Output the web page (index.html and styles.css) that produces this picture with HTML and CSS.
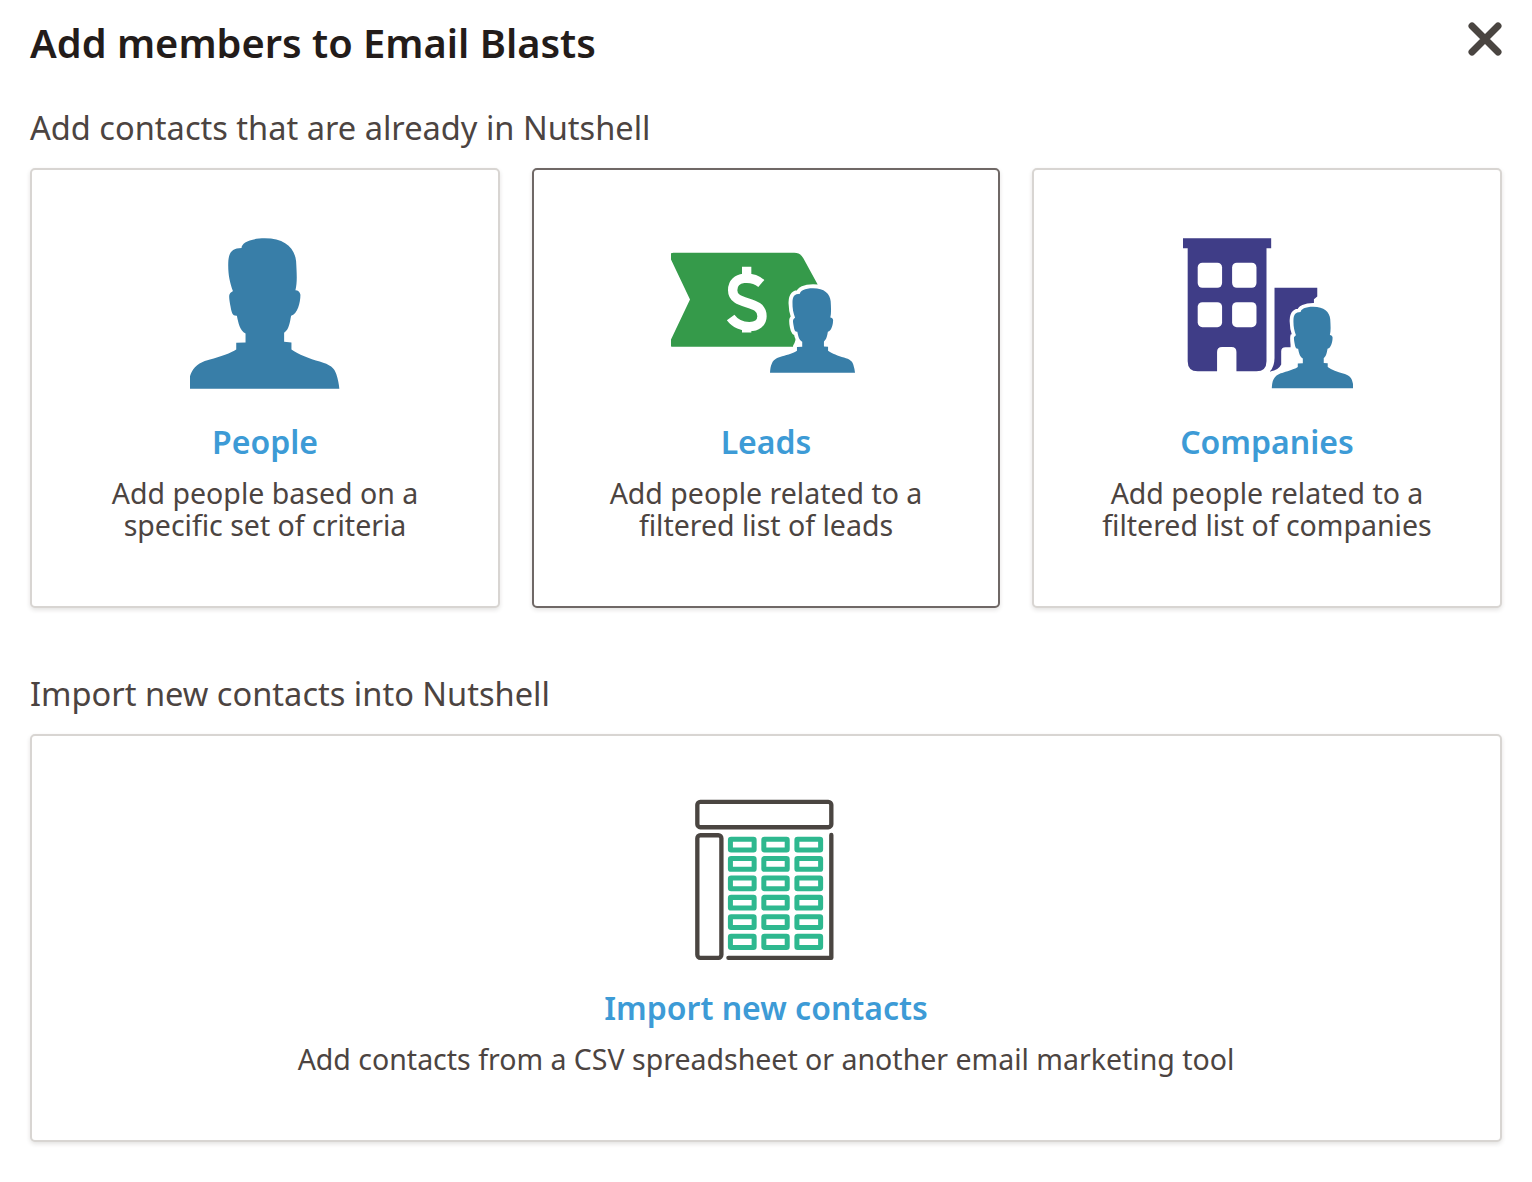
FILE: index.html
```html
<!DOCTYPE html>
<html lang="en">
<head>
<meta charset="utf-8">
<title>Add members to Email Blasts</title>
<link rel="stylesheet" href="styles.css">
</head>
<body>
<svg class="defs" aria-hidden="true"><defs>
<path id="person" d="M85 508C86 490 88 470 95 458C105 435 130 425 150 420C180 412 215 400 229 390L229 370L257 369L257 342C240 335 235 310 231 289C218 290 215 280 212 262C209 245 206 230 209 224C212 218 216 217 219 214C210 190 204 165 205 130C206 100 215 85 245 85C245 70 270 56 315 56C375 56 405 85 409 125C411 160 413 190 407 212C415 212 421 218 422 226C422 250 413 285 394 289C390 310 388 330 373 340L373 367L395 369L395 390C415 405 450 418 480 426C510 435 525 445 530 465C535 480 538 495 539 508Z"/>
</defs></svg>
<main class="page">
  <header class="head">
    <h1 class="title">Add members to Email Blasts</h1>
    <svg class="close" viewBox="0 0 34 34"><path d="M4 4L30 30M30 4L4 30"/></svg>
  </header>
  <h2 class="section section-first">Add contacts that are already in Nutshell</h2>
  <div class="cards">
    <a class="card">
      <div class="icon">
        <svg class="i-people" viewBox="90 56 454 452"><use href="#person" class="blue"/></svg>
      </div>
      <h3 class="card-title">People</h3>
      <p class="card-text">Add people based on a<br>specific set of criteria</p>
    </a>
    <a class="card card-active">
      <div class="icon">
        <svg class="i-leads" viewBox="65 66 573 362">
          <path class="green" d="M72 68H435Q453 68 462 84L505 163L470 230L432 350H72Q56 350 62 334L122 208L62 82Q56 68 72 68Z"/>
          <path class="dollar" d="M292 110V140M292 280V307M336 160C310 138 250 135 250 180C250 230 338 205 338 258C338 300 270 298 244 262"/>
          <g transform="translate(314.3 142.7) scale(.5617)"><use href="#person" class="blue halo"/></g>
        </svg>
      </div>
      <h3 class="card-title">Leads</h3>
      <p class="card-text">Add people related to a<br>filtered list of leads</p>
    </a>
    <a class="card">
      <div class="icon">
        <svg class="i-companies" viewBox="35 42 512 450">
          <path class="purple" d="M38 42H302V72H288V410Q288 440 258 440H198V382Q198 367 183 367H155Q140 367 140 382V440H82Q52 440 52 410V72H38Z"/>
          <g class="holes"><rect x="82" y="115" width="73" height="75" rx="14"/><rect x="185" y="115" width="73" height="75" rx="14"/><rect x="82" y="233" width="73" height="75" rx="14"/><rect x="185" y="233" width="73" height="75" rx="14"/></g>
          <path class="purple" d="M312 190H440V216L430 224V330H360V368H345Q332 368 332 380V420Q325 436 298 441Q312 425 312 400Z"/>
          <g transform="translate(258 216.7) scale(.54)"><use href="#person" class="blue halo"/></g>
        </svg>
      </div>
      <h3 class="card-title">Companies</h3>
      <p class="card-text">Add people related to a<br>filtered list of companies</p>
    </a>
  </div>
  <h2 class="section section-second">Import new contacts into Nutshell</h2>
  <a class="card card-wide">
    <div class="icon icon-wide">
      <svg class="i-import" viewBox="54 28 416 484">
        <g class="sheet"><rect x="55" y="36" width="401" height="76" rx="9"/><rect x="55" y="136" width="72" height="367" rx="9"/><path d="M456 135V503H148"/></g>
        <g class="cells">
          <rect x="154" y="148" width="71" height="32" rx="2"/><rect x="254" y="148" width="70" height="32" rx="2"/><rect x="353" y="148" width="71" height="32" rx="2"/>
          <rect x="154" y="206" width="71" height="32" rx="2"/><rect x="254" y="206" width="70" height="32" rx="2"/><rect x="353" y="206" width="71" height="32" rx="2"/>
          <rect x="154" y="264" width="71" height="32" rx="2"/><rect x="254" y="264" width="70" height="32" rx="2"/><rect x="353" y="264" width="71" height="32" rx="2"/>
          <rect x="154" y="322" width="71" height="32" rx="2"/><rect x="254" y="322" width="70" height="32" rx="2"/><rect x="353" y="322" width="71" height="32" rx="2"/>
          <rect x="154" y="380" width="71" height="32" rx="2"/><rect x="254" y="380" width="70" height="32" rx="2"/><rect x="353" y="380" width="71" height="32" rx="2"/>
          <rect x="154" y="438" width="71" height="34" rx="2"/><rect x="254" y="438" width="70" height="34" rx="2"/><rect x="353" y="438" width="71" height="34" rx="2"/>
        </g>
      </svg>
    </div>
    <h3 class="card-title">Import new contacts</h3>
    <p class="card-text">Add contacts from a CSV spreadsheet or another email marketing tool</p>
  </a>
</main>
</body>
</html>
```
FILE: styles.css
```css
* { box-sizing: border-box; }
html, body { margin: 0; padding: 0; background: #fff; }
body { font-family: "Noto Sans", "Open Sans", sans-serif; color: #4c4441; }
.defs { display: none; }
.page { width: 1532px; height: 1182px; padding: 16px 30px 0; }
.head { display: flex; justify-content: space-between; align-items: flex-start; height: 56px; }
.title { margin: 0; font-size: 39.8px; line-height: 54px; font-weight: 600; color: #231c1a; }
.close { width: 34px; height: 34px; margin-top: 6px; fill: none; stroke: #4a4541; stroke-width: 7; stroke-linecap: round; }
.section { margin: 0; font-size: 32.6px; line-height: 44px; font-weight: 400; color: #4c4441; }
.section-first { margin-top: 34px; margin-bottom: 18px; }
.section-second { margin-top: 64px; margin-bottom: 18px; }
.cards { display: grid; grid-template-columns: 470px 468px 470px; gap: 32px; }
.card { display: block; height: 440px; padding-top: 67px; border: 2px solid #d8d5d2; border-radius: 5px; box-shadow: 0 2px 4px rgba(60, 50, 45, .14); text-align: center; background: #fff; }
.card-active { border-color: #6f6866; }
.card-wide { height: 408px; padding-top: 63px; }
.icon { height: 152px; display: flex; align-items: center; justify-content: center; }
.icon-wide { height: 162px; }
.i-people { width: 151px; height: 151px; }
.i-leads { width: 191px; height: 121px; margin-bottom: 1px; }
.i-companies { width: 171px; height: 151px; }
.i-import { width: 139px; height: 162px; overflow: visible; }
.blue { fill: #387ea8; }
.green { fill: #359a4a; }
.purple { fill: #3f3d87; }
.halo { stroke: #fff; stroke-width: 42; paint-order: stroke; stroke-linejoin: round; }
.dollar { fill: none; stroke: #fff; stroke-width: 28; }
.holes { fill: #fff; }
.sheet { fill: none; stroke: #4a4541; stroke-width: 13; stroke-linecap: round; stroke-linejoin: round; }
.cells { fill: none; stroke: #2eb88f; stroke-width: 15; }
.card-title { margin: 30px 0 0; font-size: 32px; line-height: 46px; font-weight: 600; color: #3d9bd6; }
.card-wide .card-title { margin-top: 24px; }
.card-text { margin: 12px 0 0; font-size: 28.5px; line-height: 32px; font-weight: 400; color: #4c4441; }
```
